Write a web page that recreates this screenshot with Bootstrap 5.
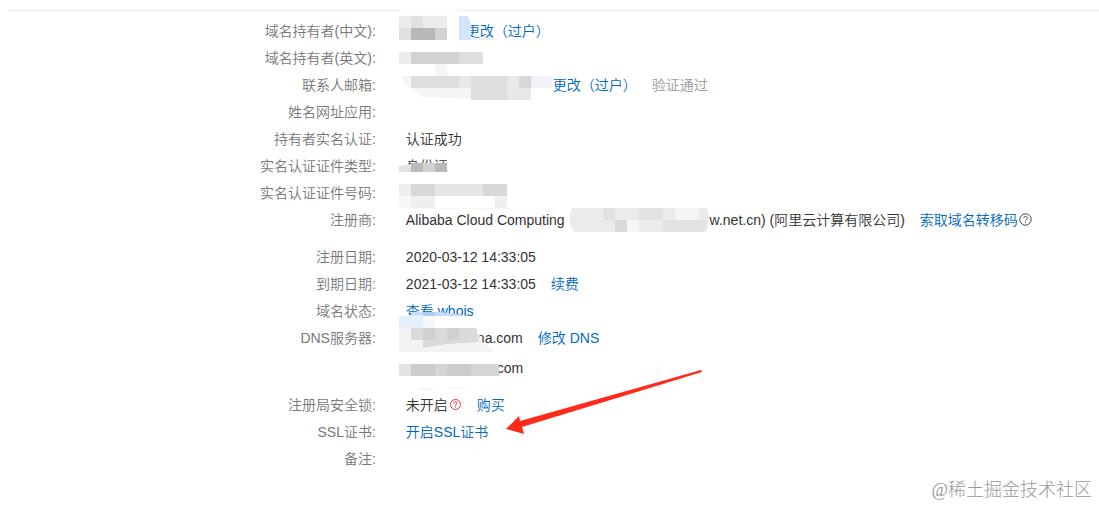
<!DOCTYPE html>
<html lang="zh-CN">
<head>
<meta charset="utf-8">
<meta name="viewport" content="width=device-width, initial-scale=1">
<title>域名信息</title>
<link href="https://cdn.jsdelivr.net/npm/bootstrap@5.3.0/dist/css/bootstrap.min.css" rel="stylesheet">
<style>
body { font-family: "Liberation Sans", "Noto Sans CJK SC", sans-serif; font-size: 14px; line-height: 27px; color: #333; background: #fff; }
a { color: #0068c0; text-decoration: none; }
.info-panel { border-top: 1px solid #ebebeb; margin: 10px 0 0 8px; }
.info-list { padding-top: 7px; margin-left: -8px; font-weight: 350; }
.info-row { min-height: 27px; }
.info-label { flex: 0 0 34.2%; text-align: right; color: #777; font-weight: 350; }
.info-value { padding-left: 30px; gap: 15px; white-space: nowrap; }
.row-gap { margin-bottom: 10px; }
.dns-second { padding-top: 3px; }
.dns-first { gap: 15px; }
.passed { color: #999; }
.hid { display: inline-block; }
.hid-name { width: 45px; }
.hid-mail { width: 132px; }
.hid-site { width: 145px; }
.hid-dns { width: 71px; }
.hid-dns2 { width: 87px; }
.help { width: 13px; height: 13px; vertical-align: -1px; margin-left: 1px; }
.notes { left: 34.2%; top: 0; width: 700px; height: 450px; pointer-events: none; }
.watermark { font-family: "Liberation Serif", "Noto Sans CJK SC", serif; font-size: 18px; color: #999; font-weight: 300; padding: 4px 7px 0 0; }
</style>
</head>
<body>
<main class="position-relative overflow-hidden">
<section class="info-panel">
<dl class="info-list mb-0">
<div class="info-row d-flex"><dt class="info-label">域名持有者(中文):</dt><dd class="info-value d-flex mb-0"><span class="hid hid-name"></span><a href="#">更改（过户）</a></dd></div>
<div class="info-row d-flex"><dt class="info-label">域名持有者(英文):</dt><dd class="info-value mb-0"></dd></div>
<div class="info-row d-flex"><dt class="info-label">联系人邮箱:</dt><dd class="info-value d-flex mb-0"><span class="hid hid-mail"></span><a href="#">更改（过户）</a><span class="passed">验证通过</span></dd></div>
<div class="info-row d-flex"><dt class="info-label">姓名网址应用:</dt><dd class="info-value mb-0"></dd></div>
<div class="info-row d-flex"><dt class="info-label">持有者实名认证:</dt><dd class="info-value mb-0">认证成功</dd></div>
<div class="info-row d-flex"><dt class="info-label">实名认证证件类型:</dt><dd class="info-value mb-0">身份证</dd></div>
<div class="info-row d-flex"><dt class="info-label">实名认证证件号码:</dt><dd class="info-value mb-0"></dd></div>
<div class="info-row row-gap d-flex"><dt class="info-label">注册商:</dt><dd class="info-value d-flex mb-0"><span>Alibaba Cloud Computing<span class="hid hid-site"></span>w.net.cn) (阿里云计算有限公司)</span><span><a href="#">索取域名转移码</a><svg class="help" viewBox="0 0 13 13" fill="none" stroke="#444"><circle cx="6.500" cy="6.500" r="5.700"/><path d="M4.700 5.200C4.700 2.700 8.400 2.800 8.400 5C8.400 6.300 6.500 6.300 6.500 7.900M6.500 8.900V10"/></svg></span></dd></div>
<div class="info-row d-flex"><dt class="info-label">注册日期:</dt><dd class="info-value mb-0">2020-03-12 14:33:05</dd></div>
<div class="info-row d-flex"><dt class="info-label">到期日期:</dt><dd class="info-value d-flex mb-0"><span>2021-03-12 14:33:05</span><a href="#">续费</a></dd></div>
<div class="info-row d-flex"><dt class="info-label">域名状态:</dt><dd class="info-value mb-0"><a href="#">查看 whois</a></dd></div>
<div class="info-row row-gap d-flex"><dt class="info-label">DNS服务器:</dt><dd class="info-value mb-0"><div class="dns-first d-flex"><span><span class="hid hid-dns"></span>na.com</span><a href="#">修改 DNS</a></div><div class="dns-second"><span class="hid hid-dns2"></span>.com</div></dd></div>
<div class="info-row d-flex"><dt class="info-label">注册局安全锁:</dt><dd class="info-value d-flex mb-0"><span>未开启<svg class="help" viewBox="0 0 13 13" fill="none" stroke="#e8323c"><circle cx="6.500" cy="6.500" r="5"/><path d="M4.900 5.300C4.900 3.200 8.100 3.300 8.100 5.100C8.100 6.200 6.500 6.200 6.500 7.500M6.500 8.500V9.500"/></svg></span><a href="#">购买</a></dd></div>
<div class="info-row d-flex"><dt class="info-label">SSL证书:</dt><dd class="info-value mb-0"><a href="#">开启SSL证书</a></dd></div>
<div class="info-row d-flex"><dt class="info-label">备注:</dt><dd class="info-value mb-0"></dd></div>
</dl>
</section>
<!-- redaction mosaic and pointer arrow laid over the values -->
<svg class="notes position-absolute" viewBox="376 0 700 450" aria-hidden="true">
<path fill="#fdfdfd" d="M399 9H461V16H399z"/>
<path fill="#ececec" d="M399 16h12v12h-12zM423 16h24v12h-24z"/><path fill="#e0e0e0" d="M411 16h12v12h-12zM399 28h12v12h-12z"/><path fill="#b8b8b8" d="M411 28h24v12h-24z"/><path fill="#d2d2d2" d="M435 28h12v12h-12z"/>
<path fill="#d3e5fa" d="M459 16h9l3 8v16h-12z"/><path fill="#e8f2fd" d="M471 38l36 2h-36z"/>
<path fill="#ececec" d="M399 52h12v12h-12z"/><path fill="#d2d2d2" d="M411 52h48v12h-48z"/><path fill="#dedede" d="M459 52h24v12h-24z"/>
<path fill="#f5f5f5" d="M435 64h12v12h-12zM401 76h10v14l-8-8zM411 88h60v11l-48-2z"/><path fill="#dedede" d="M411 76h48v12h-48zM471 76h36v24h-36z"/><path fill="#e8e8e8" d="M459 76h12v12h-12zM507 76h24v24h-24z"/><path fill="#d8d8d8" d="M519 76h12v12h-12z"/><path fill="#f0f2f8" d="M531 76h21v12h-21z"/>
<path fill="#fff" d="M399 172h60v5h-60z"/><path fill="#e2e2e2" d="M399 166l12-2v8h-12z"/><path fill="#b9b9b9" d="M411 163h36v9h-36z"/><path fill="#d1d1d1" d="M423 163h12v9h-12z"/>
<path fill="#efefef" d="M399 184h12v12h-12zM411 196h24v12h-24zM495 196h12v12h-12z"/><path fill="#d8d8d8" d="M411 184h24v12h-24zM483 184h24v12h-24z"/><path fill="#e6e6e6" d="M435 184h48v12h-48z"/><path fill="#f7f7f7" d="M399 196h12v12h-12zM411 208h106v1h-106z"/>
<path fill="#ebebeb" d="M572 208h135q5 12-1 24H574q-8-12-2-24z"/><path fill="#e2e2e2" d="M603 208h12v12h-12zM639 208h24v12h-24zM663 220h44l-3 12h-41z"/><path fill="#d9d9d9" d="M615 220h12v12h-12z"/><path fill="#f5f5f5" d="M627 220h12v12h-12zM675 208h24v12h-24z"/>
<path fill="#fff" d="M399 316h38v7h-38z"/><path fill="#c5ddf8" d="M411 312h28l24 3v1h-52z"/><path fill="#a9cdf6" d="M423 312h12v4h-12z"/><path fill="#e5f0fd" d="M399 316l24-1v13h-24z"/><path fill="#f5f8fd" d="M423 316h12v12h-12z"/>
<path fill="#f3f3f3" d="M399 328h79l2 12 15 12h-96z"/><path fill="#dadada" d="M411 328h65l3 14-32 2-24 4v-8h-12z"/><path fill="#d0d0d0" d="M423 328h12v12h-12zM447 328h12v12h-12z"/>
<path fill="#e3e3e3" d="M399 364h12v12h-12z"/><path fill="#ccc" d="M411 364h24v12h-24zM447 364h24v12h-24z"/><path fill="#d5d5d5" d="M435 364h12v12h-12zM471 364h28v12h-28z"/><path fill="#f5f5f5" d="M421 388h14l-5 2h-13zM447 388h18v1h-18z"/>
<path fill="#ff2a1a" d="M506 429L519 416L520 421L701 370L702 372L522 427L524 434z"/>
</svg>
<div class="watermark text-end">@稀土掘金技术社区</div>
</main>
<script src="https://cdn.jsdelivr.net/npm/bootstrap@5.3.0/dist/js/bootstrap.bundle.min.js"></script>
</body>
</html>
